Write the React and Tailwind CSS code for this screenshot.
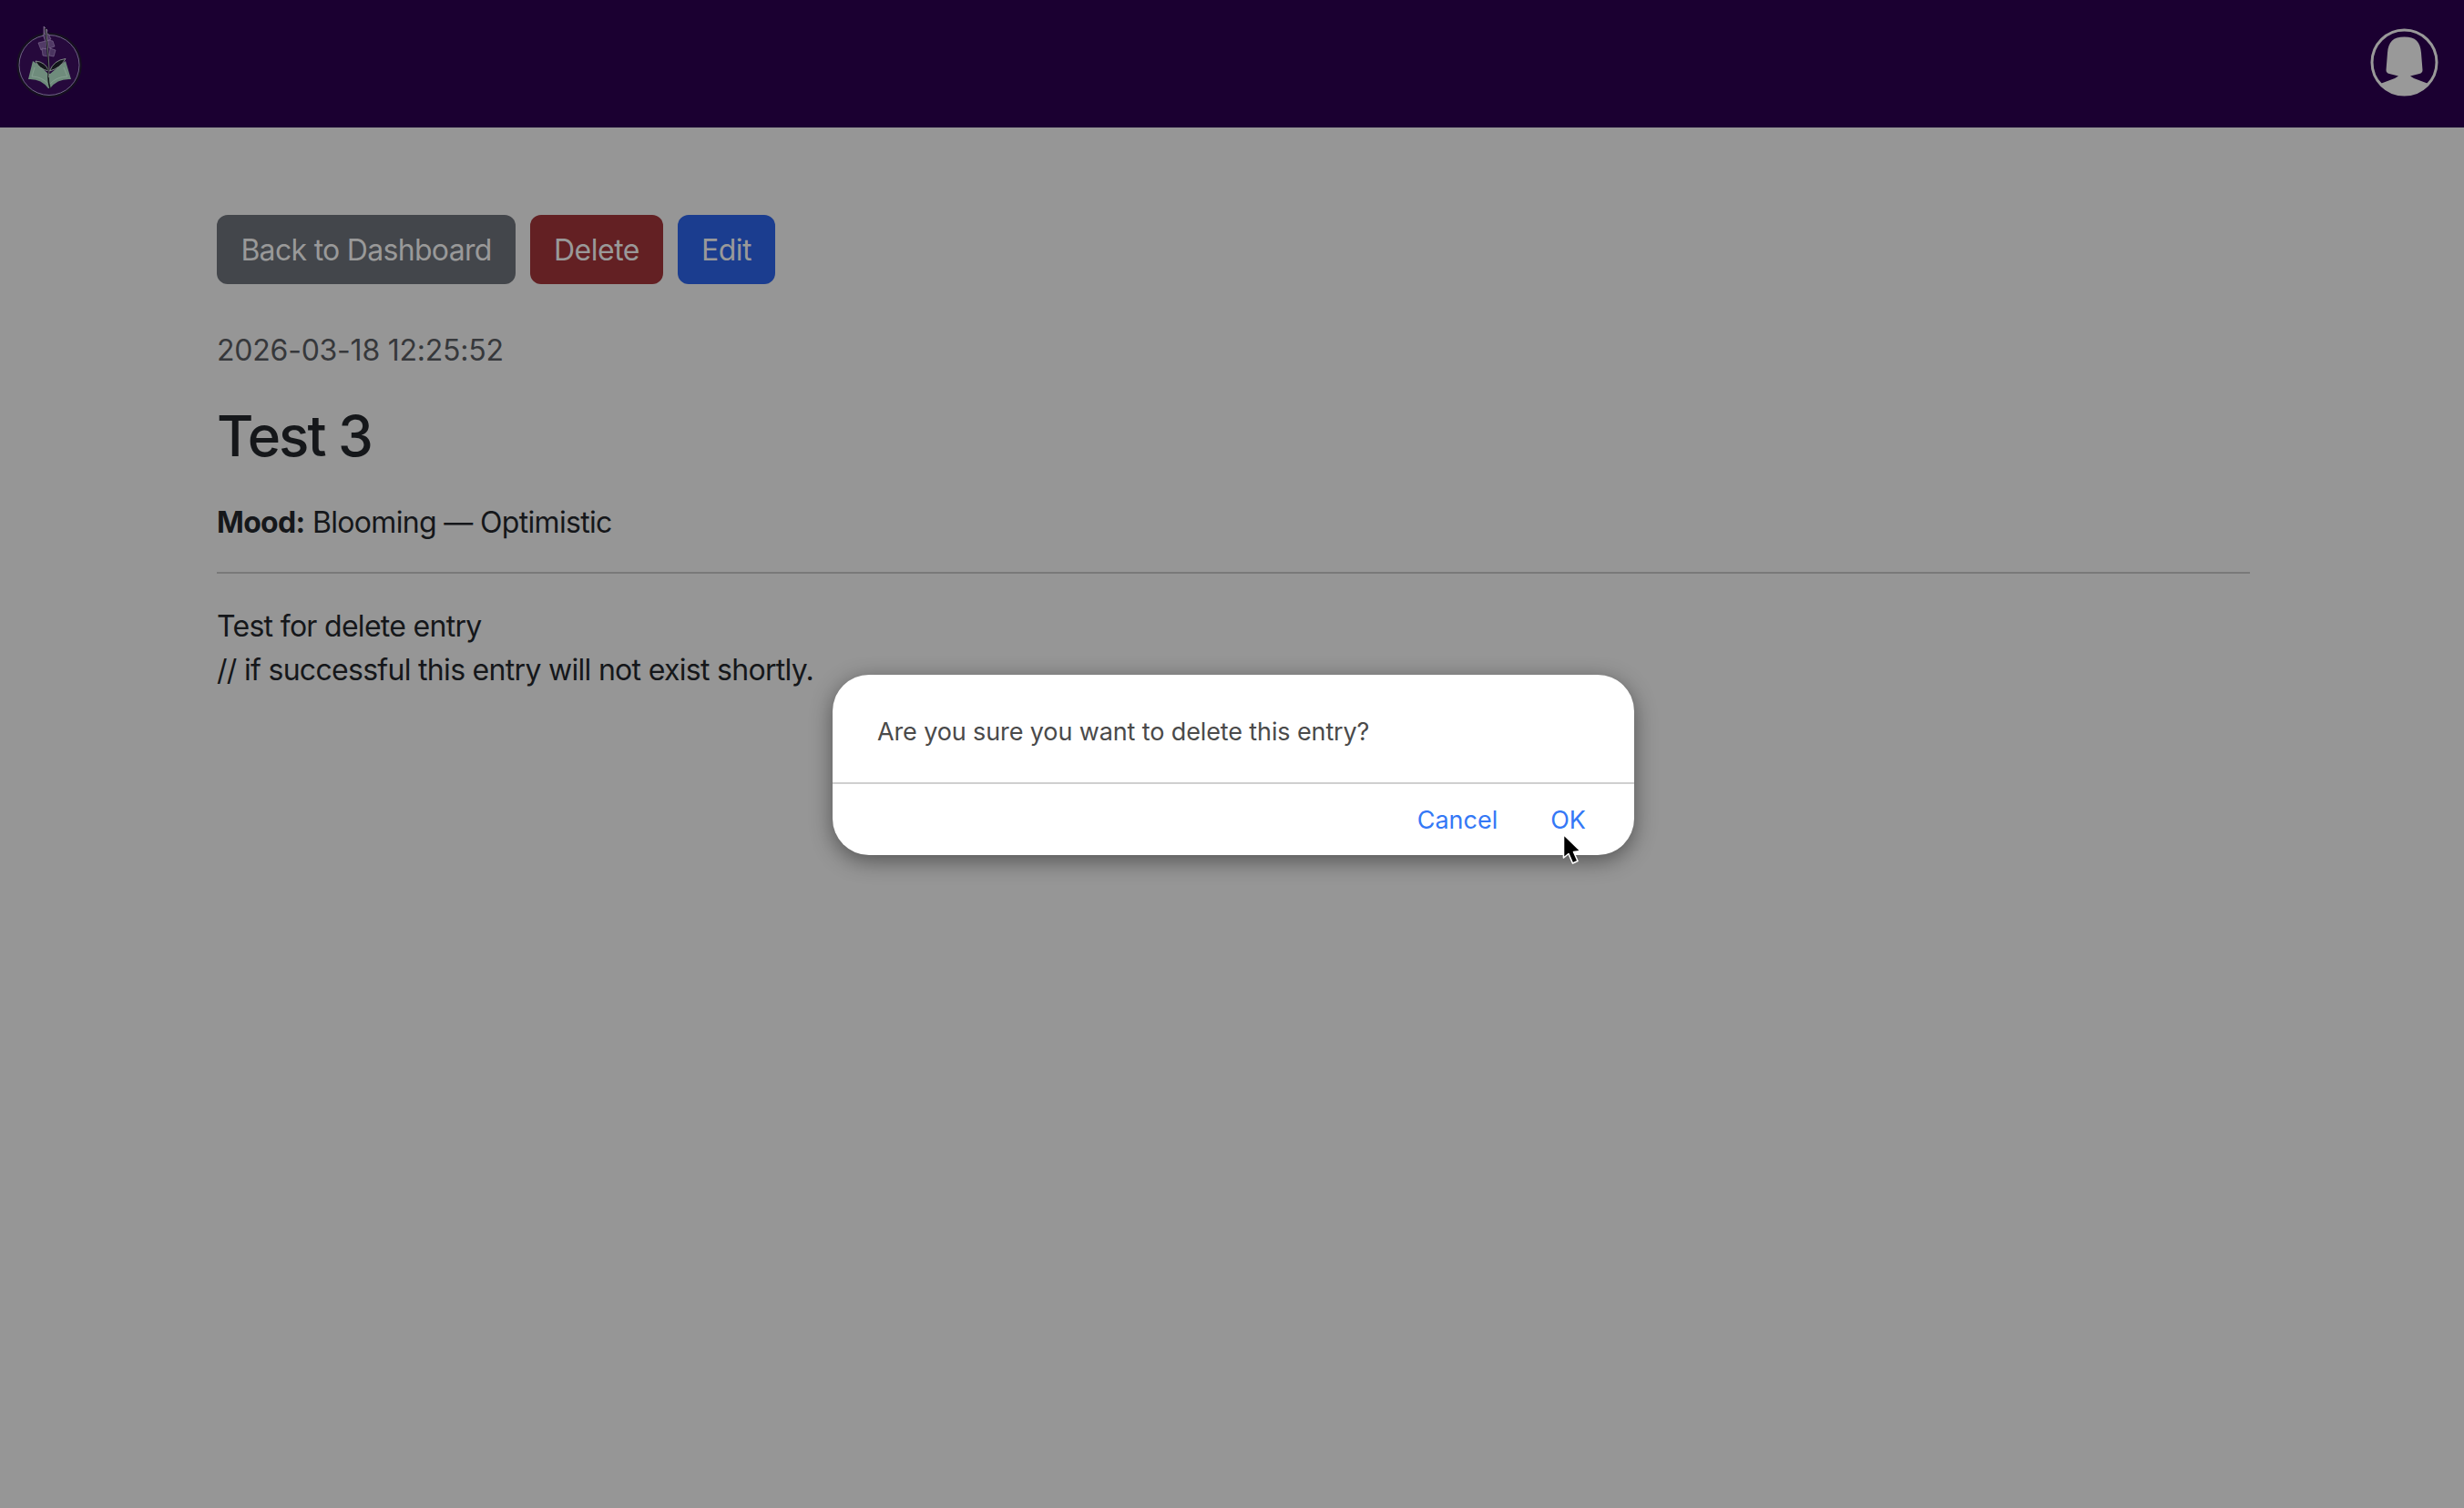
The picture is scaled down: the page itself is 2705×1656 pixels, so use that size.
import React from 'react';

const Logo = () => (
  <svg viewBox="0 0 80 85" className="w-[80px] h-[85px] shrink-0">
    {/* badge */}
    <circle cx="39" cy="46.5" r="34.5" fill="#26093c" stroke="#161020" strokeWidth="2.5" />
    <circle cx="39" cy="46.5" r="33" fill="none" stroke="#6f6585" strokeWidth="1" />
    {/* open book */}
    <path d="M21 42 L16 62 Q30 61 38 72 L40 72 Q48 61 63 62 L57 42 L52 46 L40 56 L38 56 L27 46 Z" fill="#6f8c7c" />
    <path d="M23 49 L20 59 Q31 59 39 68 Q47 59 59 59 L55 49" fill="none" stroke="#8fa899" strokeWidth="0.7" />
    {/* leaves */}
    <path d="M24 42 Q35 43 38.5 53 Q28 51 24 42 Z" fill="#12161a" stroke="#a8b5aa" strokeWidth="0.7" />
    <path d="M57 39.5 Q44 41 39.5 53 Q51 50 57 39.5 Z" fill="#12161a" stroke="#a8b5aa" strokeWidth="0.7" />
    {/* foxglove blooms */}
    <path d="M33 4 L37 8 L36 13 L33 12 Z" fill="#5d4570" stroke="#a99ab2" strokeWidth="0.5" />
    <path d="M32 13 L38 12 L41 18 L35 21 Z" fill="#513a66" stroke="#8f7d9e" strokeWidth="0.5" />
    <path d="M27 22 L35 20 L37 28 L30 30 Z" fill="#513a66" stroke="#8f7d9e" strokeWidth="0.5" />
    <path d="M38 19 L43 20 L45 26 L39 28 Z" fill="#513a66" stroke="#8f7d9e" strokeWidth="0.5" />
    <path d="M31 28 L37 29 L38 37 L32 36 Z" fill="#4a3460" stroke="#8f7d9e" strokeWidth="0.5" />
    <path d="M40 28 L46 30 L44 37 L39 36 Z" fill="#4a3460" stroke="#8f7d9e" strokeWidth="0.5" />
    {/* stem */}
    <path d="M35 6 Q37 25 38 42 Q39 52 38 60 Q38 66 40 72" fill="none" stroke="#15181c" strokeWidth="1.6" />
    <path d="M35.5 7 Q37.5 25 38.5 42 Q39.5 52 38.5 60" fill="none" stroke="#b5bcb4" strokeWidth="0.5" />
  </svg>
);

const UserIcon = () => (
  <svg viewBox="0 0 75 75" className="w-[75px] h-[75px] shrink-0 mt-[2px]">
    <circle cx="37.5" cy="37.5" r="35.5" fill="none" stroke="#999999" strokeWidth="3" />
    <path d="M37.5 9.5 C50 9.5 55 15 56 27 L57.5 46 Q57.5 49 54 50 L44 52.5 Q48 55.5 52 56.5 L64 61 A36 36 0 0 1 11 61 L23 56.5 Q27 55.5 31 52.5 L21 50 Q17.5 49 17.5 46 L19 27 C20 15 25 9.5 37.5 9.5 Z" fill="#999999" />
  </svg>
);

const Cursor = () => (
  <svg viewBox="0 0 24 36" className="absolute left-[1713px] top-[914px] w-[24px] h-[36px]">
    <path d="M3.5 2.5 L3.5 28 L9 23.5 L13.5 34 L19 31.5 L14.5 21.5 L22 20.5 Z" fill="#000000" stroke="#ffffff" strokeWidth="1.6" strokeLinejoin="round" />
  </svg>
);

export default function App() {
  return (
    <div className="relative min-h-[1656px] bg-[#969696] font-['Inter','Liberation_Sans',sans-serif] overflow-hidden">
      {/* Navbar */}
      <header className="h-[140px] bg-[#1b0031] flex items-center justify-between pl-[15px] pr-[28px] pb-[5px]">
        <Logo />
        <UserIcon />
      </header>

      {/* Entry */}
      <main className="w-[2232px] ml-[238px] pt-[96px]">
        <div className="flex gap-[16px]">
          <button className="h-[76px] w-[328px] pt-[2px] rounded-[12px] bg-[#43464b] text-[#999999] text-[32px] tracking-[-0.7px]">Back to Dashboard</button>
          <button className="h-[76px] w-[146px] pt-[2px] rounded-[12px] bg-[#632023] text-[#999999] text-[32px] tracking-[-0.5px]">Delete</button>
          <button className="h-[76px] w-[107px] pt-[2px] rounded-[12px] bg-[#1b3d8f] text-[#999999] text-[32px] tracking-[-0.5px]">Edit</button>
        </div>
        <p className="mt-[49px] text-[32px] leading-[48px] text-[#36383b] tracking-[-0.23px]">2026-03-18 12:25:52</p>
        <h2 className="mt-[32px] text-[62px] leading-[76px] font-medium text-[#15171a] tracking-[-2px]">Test 3</h2>
        <p className="mt-[33px] text-[32px] leading-[48px] text-[#15171a] tracking-[-0.67px]"><strong className="font-bold">Mood:</strong> Blooming — Optimistic</p>
        <hr className="mt-[30px] border-0 h-[2px] bg-[#797979]" />
        <p className="mt-[34px] text-[32px] leading-[48px] text-[#15171a] tracking-[-0.7px]">
          Test for delete entry
          <br />
          // if successful this entry will not exist shortly.
        </p>
      </main>

      {/* Confirm dialog */}
      <div className="absolute left-[914px] top-[741px] w-[880px] h-[198px] rounded-[40px] bg-white shadow-[0_6px_24px_rgba(0,0,0,0.45)] flex flex-col">
        <div className="h-[120px] border-b-2 border-[#cfcfcf] pl-[49px] pt-[41px] text-[27px] leading-[44px] text-[#4a4a4a] tracking-[-0.12px]">
          Are you sure you want to delete this entry?
        </div>
        <div className="flex-1 flex items-center justify-end gap-[58px] pr-[53px] pt-[2px] text-[27px] text-[#3478f6]">
          <span>Cancel</span>
          <span>OK</span>
        </div>
      </div>
      <Cursor />
    </div>
  );
}
